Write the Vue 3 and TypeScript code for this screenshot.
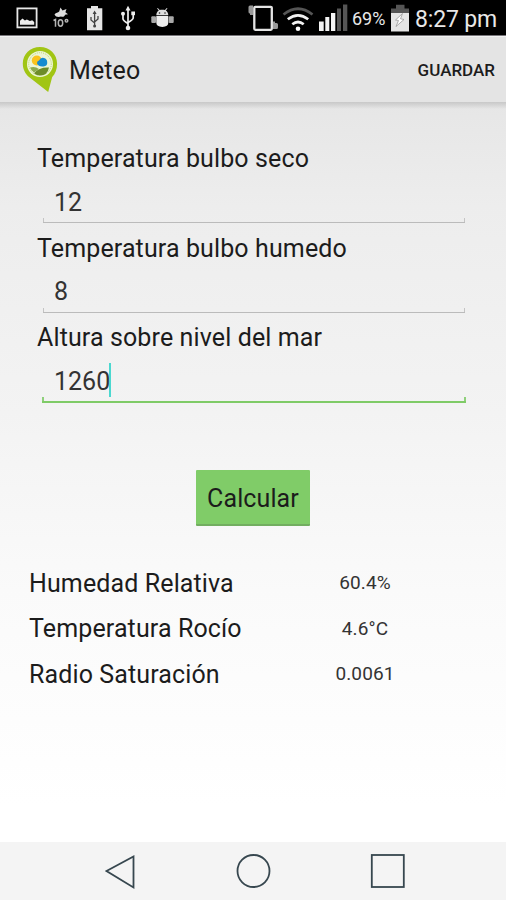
<script setup lang="ts">
import { ref } from 'vue'

interface Field {
  id: string
  label: string
  value: string
  active: boolean
}

interface Result {
  label: string
  value: string
}

const fields = ref<Field[]>([
  { id: 'dry', label: 'Temperatura bulbo seco', value: '12', active: false },
  { id: 'wet', label: 'Temperatura bulbo humedo', value: '8', active: false },
  { id: 'altitude', label: 'Altura sobre nivel del mar', value: '1260', active: true },
])

const results = ref<Result[]>([
  { label: 'Humedad Relativa', value: '60.4%' },
  { label: 'Temperatura Rocío', value: '4.6°C' },
  { label: 'Radio Saturación', value: '0.0061' },
])
</script>

<template>
  <div class="screen">
    <div class="status">
      <svg class="status-icons" width="180" height="35" viewBox="0 0 180 35">
        <rect x="17.4" y="8.4" width="19.2" height="19" fill="#050505" stroke="#e8e8e8" stroke-width="1.8" />
        <path d="M20 24.8v-4l2.5-2.4 2.4 2.2 2-1.2 3 1.6 2.3-.8 2 1.800v2.800z" fill="#eee" />
        <path d="M54.500 14.500c1.500-2 3.500-1.700 4.700-3L60.500 7.500l2 3L66.500 9l-1.100 3.200 2.600 2-3 .5c-.5 2-2 2.300-4 1.800-2.400 1-5.500.5-6.500-2z" fill="#ddd" />
        <g fill="none" stroke="#b5b5b5" stroke-width="1.500">
          <path d="M53.500 20.500l2-1v7.300" />
          <ellipse cx="60.500" cy="23" rx="2.200" ry="3.200" />
          <circle cx="66.500" cy="20.700" r="1.300" />
        </g>
        <path d="M87 8.300h4V6h7v2.300h4.300v22H87z" fill="#e6e6e6" />
        <g fill="none" stroke="#444" stroke-width="1.300">
          <path d="M94.600 12.500v14M91 17v3l3.600 3M98 16v3l-3.400 3" />
        </g>
        <path d="M94.600 10.500l2 3.500h-4z" fill="#444" />
        <circle cx="94.600" cy="26" r="1.500" fill="#444" />
        <g fill="none" stroke="#eee" stroke-width="1.700">
          <path d="M128 9v19M123 14v5q0 1.500 5 4.500M133.200 13v5q0 1.500-5.200 4.500" />
        </g>
        <path d="M128 5.800l2.500 4.700h-5z" fill="#eee" />
        <circle cx="128" cy="28" r="2.300" fill="#eee" />
        <circle cx="123" cy="13.700" r="2" fill="#eee" />
        <rect x="131.300" y="11.500" width="3.700" height="3.700" fill="#eee" />
        <path d="M156.300 15.300c0-2 1-3.700 2.500-4.700l-1.700-2.200.7-.5 1.900 2.200c1.700-.6 3.500-.6 5.200 0l1.900-2.200.7.5-1.700 2.200c1.500 1 2.500 2.700 2.500 4.700z" fill="#ddd" />
        <path d="M156.300 16h12v6.800q0 4-6 4.200-6-.2-6-4.200z" fill="#eee" />
        <rect x="151.300" y="16.300" width="4.700" height="6.700" rx="1" fill="#a9a9a9" />
        <rect x="168.700" y="16.300" width="5" height="6.700" rx="1" fill="#a9a9a9" />
        <circle cx="159.500" cy="13" r=".8" fill="#222" />
        <circle cx="165" cy="13" r=".8" fill="#222" />
      </svg>
      <div class="status-right">
        <svg class="status-icons" width="109" height="35" viewBox="243 0 109 35">
          <rect x="254.300" y="6.800" width="17.500" height="23" rx="1" fill="none" stroke="#e4e4e4" stroke-width="2.300" />
          <path d="M253 5.500h-3q-1.500 0-1.500 1.500v5q0 1.500 1.500 1.500v1.500h3zM273 21.500h2v1.500h1.500q1.500 0 1.500 1.500v3q0 1.500-1.500 1.500H273z" fill="#999" />
          <g fill="none" stroke-width="2.700">
            <path d="M283.500 14.500q14.500-11.500 29 0" stroke="#555" />
            <path d="M287.800 19.300q10.200-8 20.400 0M292.300 24.300q5.700-4.600 11.400 0" stroke="#f2f2f2" />
          </g>
          <circle cx="298" cy="28.800" r="2.300" fill="#fff" />
          <path d="M319 21.500h4.700V31H319zM325.300 17h4v14h-4zM331 13h4.300v18H331z" fill="#f4f4f4" />
          <path d="M337 8.500h4V31h-4zM343 4.500h4.300V31H343z" fill="#555" />
        </svg>
        <span class="battery-text">69%</span>
        <svg class="status-icons battery" width="18" height="35" viewBox="0 0 18 35">
          <path d="M5 4.800h8.500v3.700H18v5H0v-5h5z" fill="#555" />
          <path d="M0 13h18v18.500H0z" fill="#e5e5e5" />
          <path d="M11.500 13.500l-7 6.500 3 .5-2.500 6 8-7-3.500-.7z" fill="#fff" stroke="#999" stroke-width=".8" />
        </svg>
        <span class="clock">8:27 pm</span>
      </div>
    </div>

    <header class="bar">
      <svg class="logo" width="36" height="48" viewBox="0 0 36 48">
        <path d="M18 1C8.200 1 .8 8.300.8 17.500c0 6 2.500 10.300 6.500 13.700L26.200 46l4-15c3-3.300 4.900-7.500 4.900-13.300C35.100 8.300 27.600 1 18 1z" fill="#a1c514" />
        <circle cx="18" cy="18" r="13" fill="#edf5d6" />
        <circle cx="18" cy="18" r="11.300" fill="none" stroke="#bcd66a" stroke-width="1" stroke-dasharray="1 1" />
        <path d="M8 21.500q5-1.500 9 1.500l-5 3.500q-3-2-4-5z" fill="#8daa4d" />
        <path d="M12 27.300q5-6.300 15-5.800-1.500 8-9 8-3.500 0-6-2.200z" fill="#6d8c28" />
        <circle cx="14.800" cy="14.500" r="5" fill="#fbc31c" />
        <path d="M15 17.500q-.2-2.500 2-3 1.800-3.700 5-2.500 3 .8 3.200 4 .5 4-3.700 4.500-5 .5-6.500-3z" fill="#168bd1" />
      </svg>
      <h1 class="title">Meteo</h1>
      <button class="save">GUARDAR</button>
    </header>

    <main class="content">
      <div class="form">
        <div v-for="f in fields" :key="f.id" class="field">
          <label class="label">{{ f.label }}</label>
          <div class="input" :class="{ active: f.active }">
            <span>{{ f.value }}</span>
            <i v-if="f.active" class="caret"></i>
          </div>
        </div>
      </div>
      <button class="calc">Calcular</button>
      <div class="results">
        <div v-for="r in results" :key="r.label" class="result">
          <span class="name">{{ r.label }}</span>
          <span class="value">{{ r.value }}</span>
        </div>
      </div>
    </main>

    <nav class="nav">
      <svg width="506" height="58" viewBox="0 0 506 58" fill="none" stroke="#37474f" stroke-width="1.800">
        <path d="M133.500 14.500v31L106.500 29z" />
        <circle cx="253.500" cy="29" r="16" />
        <rect x="371.800" y="13" width="32" height="32" />
      </svg>
    </nav>
  </div>
</template>

<style>
body {
  margin: 0;
}
</style>

<style scoped>
.screen {
  width: 506px;
  height: 900px;
  display: flex;
  flex-direction: column;
  overflow: hidden;
  font-family: Roboto, "Liberation Sans", sans-serif;
  color: #1c1c1c;
  background: #fff;
}

button {
  font-family: inherit;
  color: inherit;
  border: 0;
  padding: 0;
  margin: 0;
}

.status {
  height: 35px;
  flex: none;
  display: flex;
  justify-content: space-between;
  background: #000;
  border-bottom: 1px solid #77757a;
  box-sizing: content-box;
}

.status-icons {
  display: block;
  flex: none;
}

.status-right {
  width: 263px;
  display: flex;
  color: #e8e8e8;
  white-space: nowrap;
}

.battery-text {
  width: 39px;
  font-size: 18px;
  line-height: 38px;
}

.battery {
  margin-right: 6px;
}

.clock {
  font-size: 23px;
  letter-spacing: -0.15px;
  line-height: 39px;
}

.bar {
  height: 66px;
  flex: none;
  display: flex;
  align-items: center;
  box-sizing: border-box;
  padding: 1px 11px 0 22px;
  background: #e4e4e4;
  border-top: 1px solid #f2f2f2;
}

.logo {
  margin-right: 11px;
}

.title {
  margin: 0;
  padding-top: 2px;
  flex: 1;
  font-size: 25px;
  font-weight: 400;
  letter-spacing: 0.1px;
  line-height: 30px;
}

.save {
  background: none;
  font-size: 17px;
  font-weight: 500;
  line-height: 30px;
}

.content {
  height: 740px;
  flex: none;
  display: flex;
  flex-direction: column;
  align-items: center;
  box-sizing: border-box;
  padding-top: 42px;
  background:
    linear-gradient(#c8c8c8, rgba(220, 220, 220, 0)) 0 0 / 100% 7px no-repeat,
    linear-gradient(#e6e6e6, #ededed 14%, #f3f3f3 42%, #fafafa 66%, #fff 95%);
}

.form {
  width: 432px;
}

.field {
  height: 89.500px;
}

.label {
  display: block;
  font-size: 25px;
  letter-spacing: 0.12px;
  line-height: 30px;
  white-space: nowrap;
}

.input {
  display: flex;
  align-items: center;
  height: 49px;
  box-sizing: border-box;
  margin: 0 4px 0 6px;
  padding: 7px 0 0 11px;
  font-size: 25px;
  color: #333;
  background:
    linear-gradient(#bbb, #bbb) 0 100% / 100% 1px no-repeat,
    linear-gradient(#c4c4c4, #c4c4c4) 0 100% / 1px 5px no-repeat,
    linear-gradient(#c4c4c4, #c4c4c4) 100% 100% / 1px 5px no-repeat;
}

.input.active {
  height: 50px;
  margin: 0 3px 0 5px;
  padding-left: 12px;
  padding-top: 6px;
  background:
    linear-gradient(#7fcb67, #7fcb67) 0 100% / 100% 2px no-repeat,
    linear-gradient(#8fd07b, #8fd07b) 0 100% / 2px 6px no-repeat,
    linear-gradient(#8fd07b, #8fd07b) 100% 100% / 2px 6px no-repeat;
}

.caret {
  width: 2px;
  height: 34px;
  margin: -2px 0 0 -1px;
  background: #4bd8d0;
}

.calc {
  width: 114px;
  height: 56px;
  margin-top: 57px;
  padding-top: 4px;
  background: #80cc68;
  border-bottom: 2px solid #72ad60;
  border-radius: 1px;
  font-size: 25px;
  letter-spacing: 0.1px;
}

.results {
  width: 506px;
  box-sizing: border-box;
  padding: 35px 0 0 29px;
}

.result {
  display: flex;
  align-items: center;
  height: 45.500px;
}

.name {
  width: 276px;
  font-size: 25px;
  letter-spacing: 0.12px;
}

.value {
  width: 120px;
  padding-bottom: 1px;
  font-size: 19px;
  letter-spacing: 0.1px;
  text-align: center;
  color: #333;
}

.nav {
  height: 58px;
  flex: none;
  background: #f4f4f4;
}

.nav svg {
  display: block;
}
</style>
